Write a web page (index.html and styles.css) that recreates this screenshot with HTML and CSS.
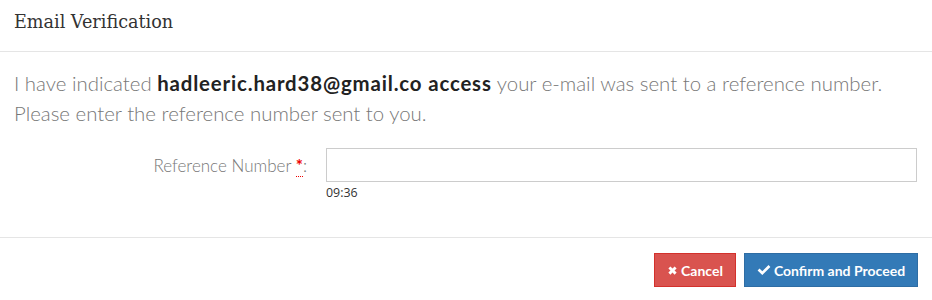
FILE: index.html
```html
<!DOCTYPE html>
<html>
<head>
<meta charset="utf-8">
<link rel="stylesheet" href="styles.css">
</head>
<body>
<div class="modal">
  <div class="modal-header">
    <h4 class="modal-title">Email Verification</h4>
  </div>
  <div class="modal-body">
    <p class="lead">I have indicated <strong>hadleeric.hard38@gmail.co access</strong> your e-mail was sent to a reference number.<br>Please enter the reference number sent to you.</p>
    <div class="form-row">
      <label class="form-label">Reference Number <abbr class="req" title="required">*</abbr>:</label>
      <div class="form-field">
        <input class="form-input" type="text">
        <div class="timer">09:36</div>
      </div>
    </div>
  </div>
  <div class="modal-footer">
    <button class="btn btn-danger"><svg class="ico" viewBox="0 0 12 12" width="11" height="11"><path d="M1.5 3.7 3.7 1.5 6 3.8 8.3 1.5 10.5 3.7 8.2 6 10.5 8.3 8.3 10.5 6 8.2 3.7 10.5 1.5 8.3 3.8 6Z" fill="#fff"/></svg>Cancel</button>
    <button class="btn btn-primary"><svg class="ico" viewBox="0 0 14 12" width="14" height="12"><path d="M0.6 6.4 2.5 4.5 5.3 7.3 11.5 1.1 13.4 3 5.3 11.1Z" fill="#fff"/></svg>Confirm and Proceed</button>
  </div>
</div>
</body>
</html>
```
FILE: styles.css
```css
html, body {
  margin: 0;
  padding: 0;
  background: #fff;
}
.modal {
  width: 932px;
  height: 300px;
  font-family: "Lato", "Open Sans", sans-serif;
  color: #333;
}
.modal-header {
  height: 52px;
  border-bottom: 1px solid #e5e5e5;
  padding: 0 14px;
  box-sizing: border-box;
  display: flex;
  align-items: center;
}
.modal-title {
  margin: 0;
  font-family: "DejaVu Serif", serif;
  font-weight: 400;
  font-size: 17.6px;
  color: #333;
  line-height: 1;
  padding-bottom: 6px;
}
.modal-body {
  padding: 16px 15px 0 14px;
  height: 186px;
  box-sizing: border-box;
  border-bottom: 1px solid #e5e5e5;
}
.lead {
  margin: 0 0 20px;
  font-size: 20.4px;
  line-height: 30px;
  font-weight: 300;
  color: #777;
  white-space: nowrap;
}
.lead strong {
  font-weight: 700;
  color: #222;
  letter-spacing: 0.85px;
}
.form-row {
  display: flex;
  align-items: flex-start;
}
.form-label {
  flex: 0 0 293px;
  margin-right: 19px;
  text-align: right;
  font-size: 17px;
  line-height: 36px;
  font-weight: 300;
  color: #777;
  font-family: "Lato", sans-serif;
  white-space: nowrap;
}
.req {
  color: #e00;
  text-decoration: none;
  border-bottom: 1px dotted #e00;
  font-weight: 700;
}
.form-field {
  flex: 1;
}
.form-input {
  display: block;
  width: 100%;
  height: 34px;
  box-sizing: border-box;
  border: 1px solid #ccc;
  margin: 0;
  padding: 6px 12px;
  background: #fff;
}
.timer {
  font-family: "Open Sans", sans-serif;
  font-size: 12.4px;
  line-height: 17px;
  margin-top: 2px;
  color: #333;
}
.modal-footer {
  padding: 15px 14px 0 15px;
  display: flex;
  justify-content: flex-end;
  gap: 8px;
}
.btn {
  height: 34px;
  box-sizing: border-box;
  padding: 0 8px;
  font-family: "Lato", sans-serif;
  font-size: 14px;
  font-weight: 700;
  color: #fff;
  display: flex;
  align-items: center;
  justify-content: center;
  gap: 3px;
  white-space: nowrap;
  cursor: pointer;
  border-radius: 0;
}
.btn-danger {
  background: #d9534f;
  border: 1px solid #d3312c;
  width: 82px;
}
.btn-primary {
  background: #337ab7;
  border: 1px solid #2e6da4;
  width: 174px;
}
.ico {
  flex: 0 0 auto;
}
```
